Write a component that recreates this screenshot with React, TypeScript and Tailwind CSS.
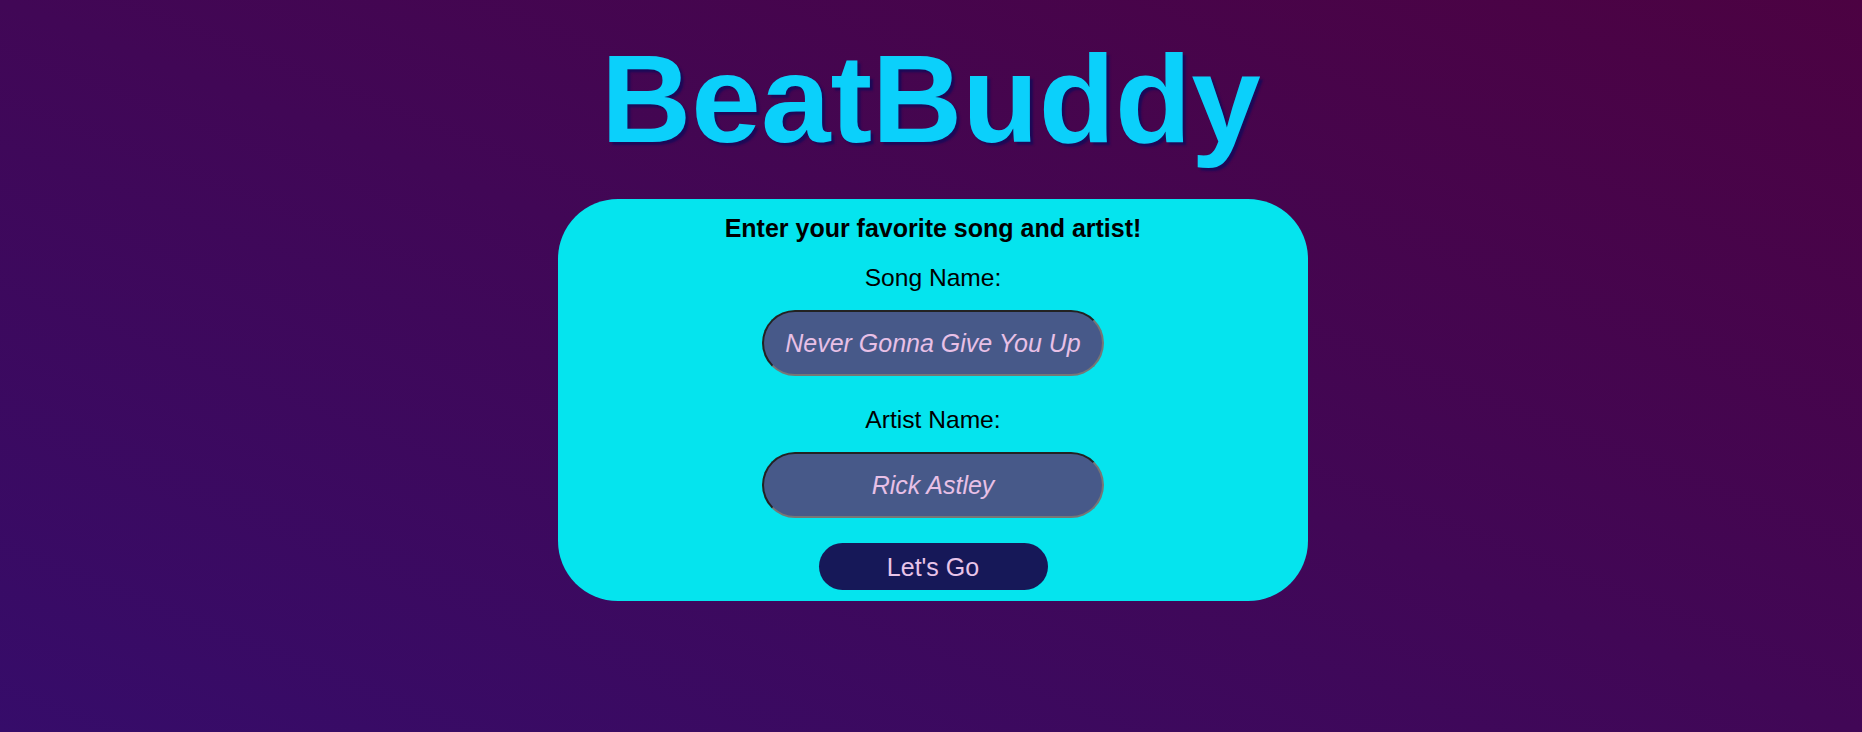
import React from "react";

export default function App() {
  return (
    <div className="min-h-screen w-full bg-[linear-gradient(to_top_right,#360c6a,#4c0242)] font-['Liberation_Sans',Arial,sans-serif] flex flex-col items-center">
      <h1 className="pt-[36px] text-[125px] leading-[125px] font-bold text-[#0bd0fb] [text-shadow:3px_3px_2px_#1c0958] m-0">
        BeatBuddy
      </h1>
      <div className="mt-[38px] w-[750px] h-[402px] rounded-[60px] bg-[#05e4ee] flex flex-col items-center pt-[15px] pb-[11px] translate-x-[2px]">
        <h2 className="text-[25px] leading-[28px] font-bold text-black m-0">
          Enter your favorite song and artist!
        </h2>
        <label className="mt-[22px] text-[24.6px] leading-[28px] text-black">Song Name:</label>
        <input
          defaultValue="Never Gonna Give You Up"
          className="mt-[18px] w-[342px] h-[66px] rounded-full bg-[#475989] text-[#e8c0e6] italic text-[25px] text-center border-2 border-solid border-t-[#222222] border-l-[#222222] border-r-[#767676] border-b-[#767676] outline-none font-['Liberation_Sans',Arial,sans-serif]"
        />
        <label className="mt-[30px] text-[24.6px] leading-[28px] text-black">Artist Name:</label>
        <input
          defaultValue="Rick Astley"
          className="mt-[18px] w-[342px] h-[66px] rounded-full bg-[#475989] text-[#e8c0e6] italic text-[25px] text-center border-2 border-solid border-t-[#222222] border-l-[#222222] border-r-[#767676] border-b-[#767676] outline-none font-['Liberation_Sans',Arial,sans-serif]"
        />
        <button className="mt-[25px] w-[229px] h-[47px] rounded-full bg-[#161858] text-[#e8c4e8] text-[25px] leading-[28px] font-['Liberation_Sans',Arial,sans-serif]">
          Let's Go
        </button>
      </div>
    </div>
  );
}
